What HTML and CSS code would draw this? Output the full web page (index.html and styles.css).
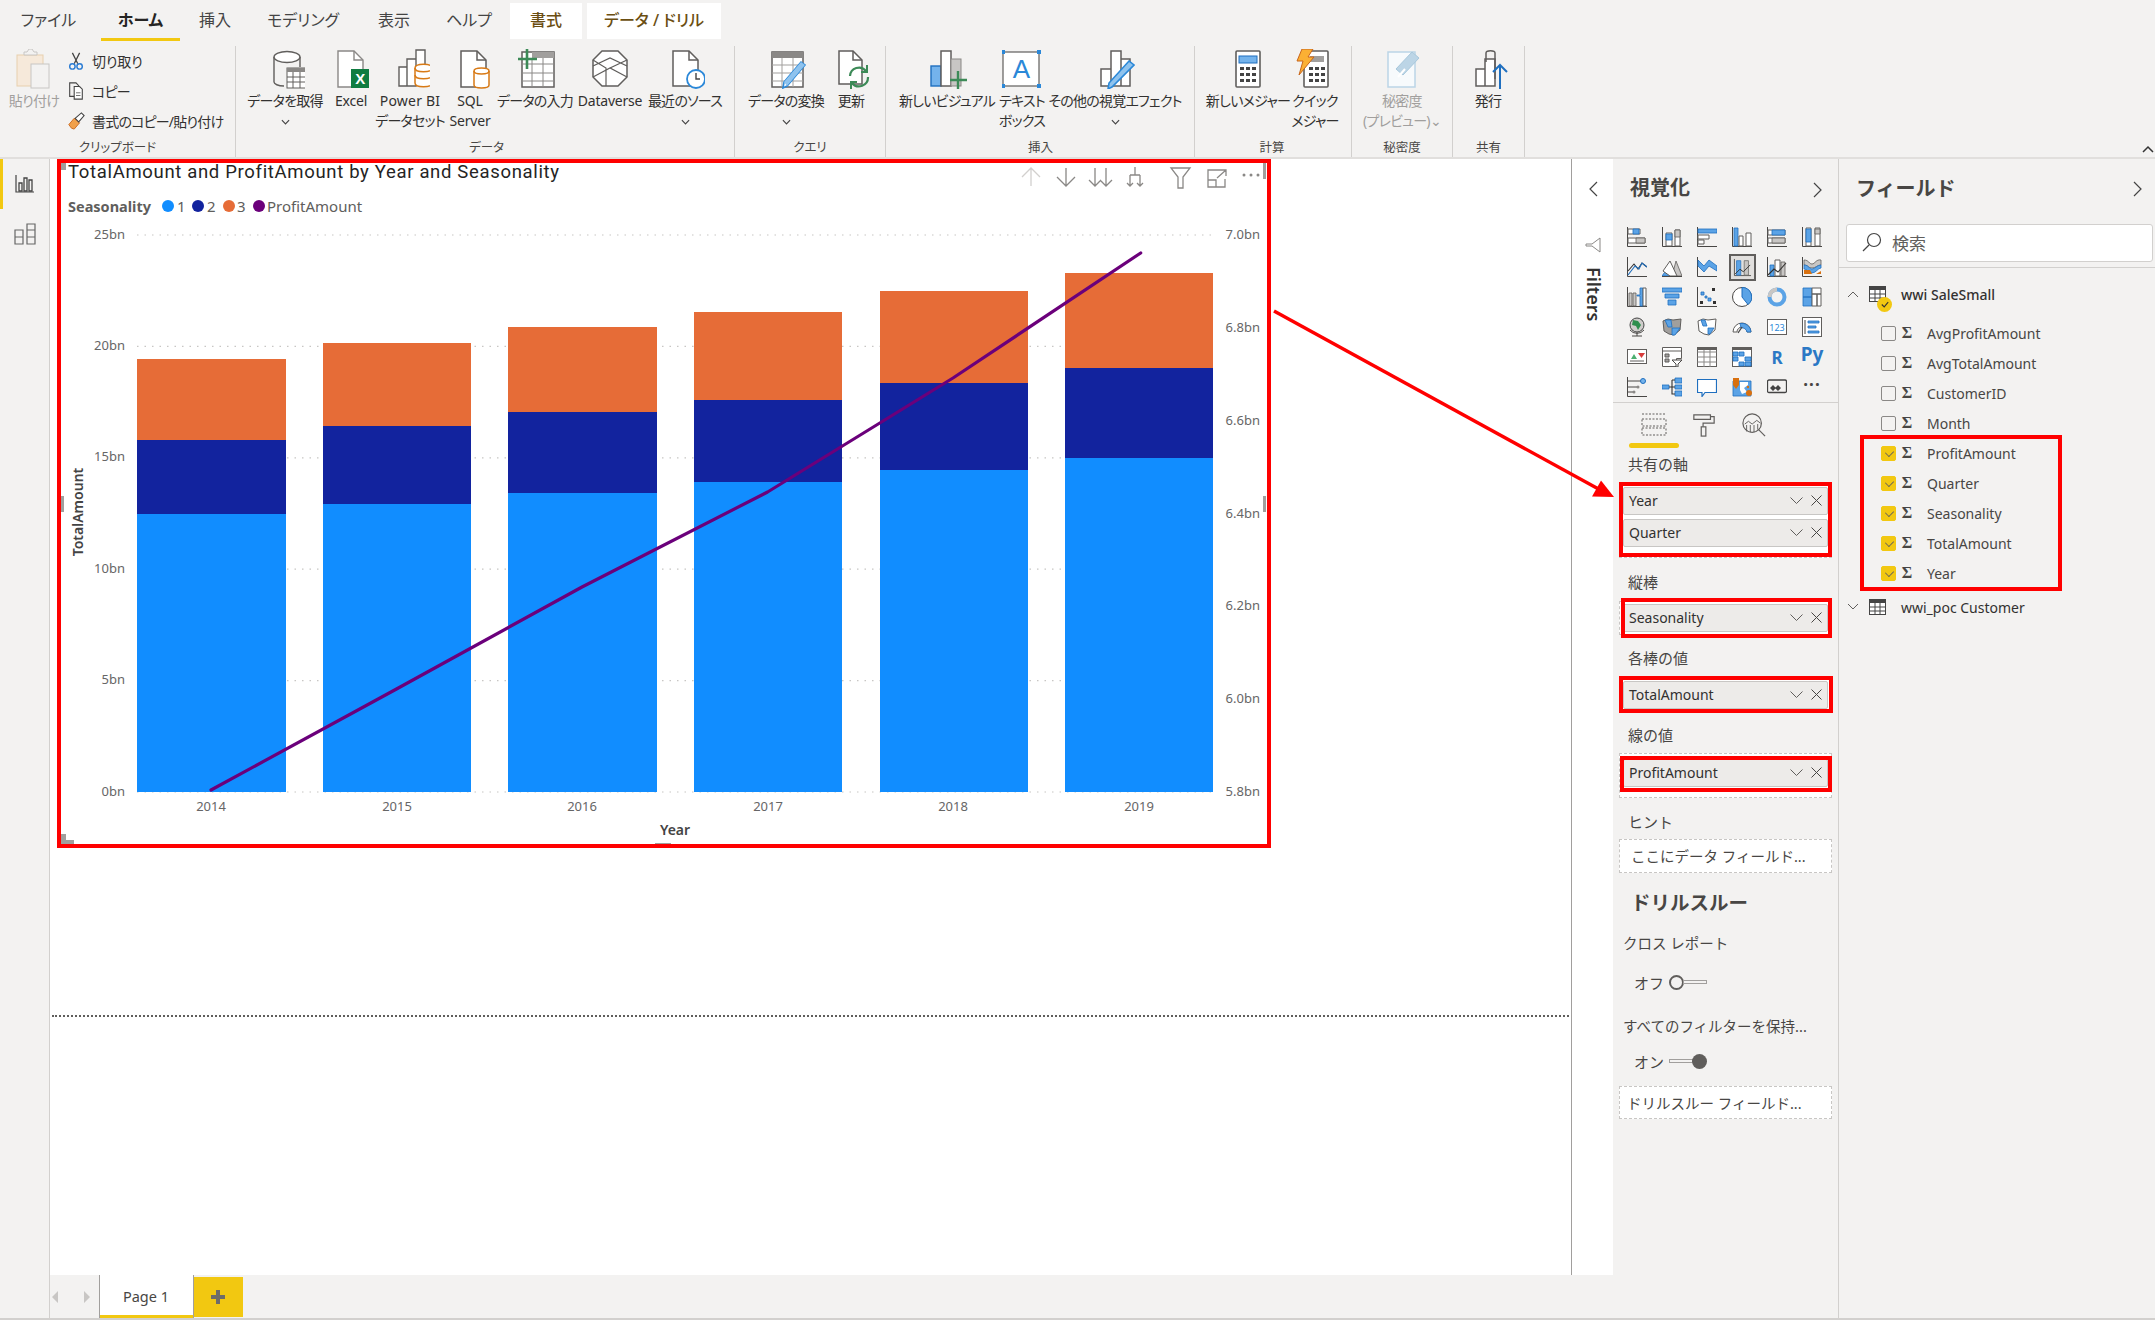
FILE: index.html
```html
<!DOCTYPE html>
<html lang="ja">
<head>
<meta charset="utf-8">
<title>Power BI Desktop</title>
<link rel="stylesheet" href="styles.css">
</head>
<body>
<header class="ribbon">
  <nav class="tabs">
    <span class="tab t-file">ファイル</span>
    <span class="tab t-home active">ホーム</span>
    <span class="tab t-ins">挿入</span>
    <span class="tab t-model">モデリング</span>
    <span class="tab t-view">表示</span>
    <span class="tab t-help">ヘルプ</span>
    <span class="tab t-fmt ctx">書式</span>
    <span class="tab t-drill ctx">データ / ドリル</span>
  </nav>
  <div class="groups">
    <section class="group g-clip">
      <div class="cmds clip">
        <div class="cmd faded w-paste">
          <svg class="ric" viewBox="0 0 40 40"><rect x="3" y="6" width="26" height="31" fill="#f6e9da" stroke="#e8cfae"/><path d="M10 6V3h3l2-3h3l2 3h3v3z" fill="#f3f2f1" stroke="#c8c6c4"/><rect x="17" y="15" width="18" height="24" fill="#f3f2f1" stroke="#c8c6c4"/></svg>
          <span>貼り付け</span>
        </div>
        <div class="clip-list">
          <div class="mini"><svg class="sic" viewBox="0 0 20 20"><path d="M6 1l6 12M14 1L8 13" fill="none" stroke="#444" stroke-width="1.4"/><circle cx="6" cy="16" r="3" fill="none" stroke="#2b7cd3" stroke-width="1.6"/><circle cx="14" cy="16" r="3" fill="none" stroke="#2b7cd3" stroke-width="1.6"/></svg><span>切り取り</span></div>
          <div class="mini tight"><svg class="sic" viewBox="0 0 20 20"><path d="M3 1h7l3 3v12H3z" fill="none" stroke="#444" stroke-width="1.2"/><path d="M8 5h6l3 3v11H8z" fill="#fff" stroke="#444" stroke-width="1.2"/><path d="M10 12h5M10 15h5" stroke="#666"/></svg><span>コピー</span></div>
          <div class="mini tight"><svg class="sic" viewBox="0 0 20 20"><path d="M2 14l6-7 6 5-6 7-3-1z" fill="#f0a04b" stroke="#c8651b"/><path d="M9 7l7-6 3 3-6 7z" fill="#fff" stroke="#444" stroke-width="1.2"/></svg><span>書式のコピー/貼り付け</span></div>
        </div>
      </div>
      <div class="glabel">クリップボード</div>
    </section>

    <section class="group g-data">
      <div class="cmds">
        <div class="cmd w72">
          <svg class="ric" viewBox="-3 0 40 40"><path d="M6 8v25c0 2 4 4 10 4M32 8v10" fill="none" stroke="#605e5c" stroke-width="1.4"/><ellipse cx="19" cy="8" rx="13" ry="5.5" fill="#fff" stroke="#605e5c" stroke-width="1.4"/><rect x="19" y="19" width="19" height="20" fill="#fff" stroke="#605e5c"/><rect x="19" y="19" width="19" height="4" fill="#8a8886"/><path d="M25 23v16M32 23v16M19 28h19M19 33h19" stroke="#605e5c"/></svg>
          <span>データを取得</span><svg class="chev" viewBox="0 0 10 6"><path d="M1 1l4 4 4-4" fill="none" stroke="#444" stroke-width="1.3"/></svg>
        </div>
        <div class="cmd w60">
          <svg class="ric" viewBox="0 0 40 40"><path d="M7 2h16l9 9v27H7z" fill="#fff" stroke="#8a8886" stroke-width="1.4"/><path d="M23 2v9h9" fill="none" stroke="#8a8886" stroke-width="1.4"/><rect x="20" y="20" width="18" height="19" fill="#107c41"/><text x="29" y="35" class="xl">X</text></svg>
          <span class="lat">Excel</span>
        </div>
        <div class="cmd w58">
          <svg class="ric" viewBox="-6 0 40 40"><path d="M3 18h8v19H3zM11 10h9v27h-9zM20 1h9v18h-9z" fill="#fff" stroke="#605e5c" stroke-width="1.4"/><path d="M19 19c0-5 17-5 17 0v15c0 5-17 5-17 0z" fill="#fff" stroke="#d87a16" stroke-width="1.5"/><path d="M19 19c0 5 17 5 17 0M19 26c0 5 17 5 17 0" fill="none" stroke="#d87a16" stroke-width="1.5"/></svg>
          <span><b class="lat pbi">Power BI</b><br>データセット</span>
        </div>
        <div class="cmd w62">
          <svg class="ric" viewBox="-4 0 40 40"><path d="M7 2h16l9 9v27H7z" fill="#fff" stroke="#605e5c" stroke-width="1.5"/><path d="M23 2v9h9" fill="none" stroke="#605e5c" stroke-width="1.5"/><path d="M20 22c0-4 15-4 15 0v14c0 4-15 4-15 0z" fill="#fff" stroke="#d87a16" stroke-width="1.5"/><path d="M20 22c0 4 15 4 15 0" fill="none" stroke="#d87a16" stroke-width="1.5"/></svg>
          <span class="lat">SQL<br>Server</span>
        </div>
        <div class="cmd w68">
          <svg class="ric" viewBox="-2 0 40 40"><rect x="5" y="3" width="32" height="35" fill="#fff" stroke="#605e5c" stroke-width="1.5"/><rect x="15" y="3" width="22" height="6" fill="#a19f9d"/><path d="M5 15h32M5 24h32M5 32h32M15 9v29M26 9v29" stroke="#8a8886"/><path d="M10 0v20M1 10h19" stroke="#3c8a57" stroke-width="2.6"/></svg>
          <span>データの入力</span>
        </div>
        <div class="cmd w82">
          <svg class="ric" viewBox="0 0 40 40"><path d="M12 2h16l9 9v17l-9 9H12l-9-9V11z" fill="#fff" stroke="#605e5c" stroke-width="1.5"/><path d="M3 17l17-8 17 8M3 11l13 8v18M3 28l17-9 17 9M37 11L20 19" fill="none" stroke="#605e5c" stroke-width="1.2"/></svg>
          <span class="lat">Dataverse</span>
        </div>
        <div class="cmd w68">
          <svg class="ric" viewBox="-1 0 40 40"><path d="M7 2h16l9 9v26H7z" fill="#fff" stroke="#605e5c" stroke-width="1.5"/><path d="M23 2v9h9" fill="none" stroke="#605e5c" stroke-width="1.5"/><circle cx="30" cy="30" r="9" fill="#fff" stroke="#2b88d8" stroke-width="1.8"/><path d="M30 24v6h4" fill="none" stroke="#444" stroke-width="1.4"/></svg>
          <span>最近のソース</span><svg class="chev" viewBox="0 0 10 6"><path d="M1 1l4 4 4-4" fill="none" stroke="#444" stroke-width="1.3"/></svg>
        </div>
      </div>
      <div class="glabel">データ</div>
    </section>

    <section class="group g-query">
      <div class="cmds">
        <div class="cmd w82">
          <svg class="ric" viewBox="-3 0 40 40"><rect x="3" y="3" width="31" height="35" fill="#fff" stroke="#605e5c" stroke-width="1.5"/><rect x="3" y="3" width="31" height="6" fill="#8a8886"/><path d="M3 16h31M3 24h31M3 32h31M13 9v29M24 9v29" stroke="#a19f9d"/><path d="M18 37l-4 2 1-6 17-20 4 3z" fill="#fff" stroke="#2b88d8" stroke-width="1.6"/><path d="M15 33l17-20 4 3-18 21z" fill="#8fc3ee"/></svg>
          <span>データの変換</span><svg class="chev" viewBox="0 0 10 6"><path d="M1 1l4 4 4-4" fill="none" stroke="#444" stroke-width="1.3"/></svg>
        </div>
        <div class="cmd w48">
          <svg class="ric" viewBox="-1 0 40 40"><path d="M7 2h14l9 9v24H7z" fill="#fff" stroke="#605e5c" stroke-width="1.5"/><path d="M21 2v9h9" fill="none" stroke="#605e5c" stroke-width="1.5"/><path d="M18 27a9 9 0 0 1 16-5M36 28a9 9 0 0 1-16 6" fill="none" stroke="#3c8a57" stroke-width="2.2"/><path d="M35 16v7h-6M19 40v-7h6" fill="none" stroke="#3c8a57" stroke-width="2"/></svg>
          <span>更新</span>
        </div>
      </div>
      <div class="glabel">クエリ</div>
    </section>

    <section class="group g-insert">
      <div class="cmds">
        <div class="cmd w100">
          <svg class="ric" viewBox="-3 0 40 40"><rect x="1" y="17" width="10" height="20" fill="#74b3ec" stroke="#1f6fbf" stroke-width="1.4"/><rect x="11" y="2" width="10" height="35" fill="#fff" stroke="#605e5c" stroke-width="1.5"/><rect x="21" y="10" width="10" height="27" fill="#c8c6c4" stroke="#8a8886"/><path d="M28 22v18M20 31h18" stroke="#3c8a57" stroke-width="2.4"/></svg>
          <span>新しいビジュアル</span>
        </div>
        <div class="cmd w50">
          <svg class="ric" viewBox="1 0 40 40"><rect x="2" y="3" width="36" height="34" fill="#fff" stroke="#605e5c" stroke-width="1.2"/><path d="M0 1h4v4H0zM36 1h4v4h-4zM0 35h4v4H0zM36 35h4v4h-4z" fill="#2b88d8"/><text x="20" y="29" class="txa">A</text></svg>
          <span>テキスト<br>ボックス</span>
        </div>
        <div class="cmd w136">
          <svg class="ric" viewBox="-3 0 40 40"><path d="M3 20h10v17H3zM13 2h10v35H13zM23 10h9v27h-9z" fill="#fff" stroke="#605e5c" stroke-width="1.5"/><path d="M14 38l-4 2 1-6 20-22 5 4z" fill="#8fc3ee" stroke="#2b88d8" stroke-width="1.6"/></svg>
          <span>その他の視覚エフェクト</span><svg class="chev" viewBox="0 0 10 6"><path d="M1 1l4 4 4-4" fill="none" stroke="#444" stroke-width="1.3"/></svg>
        </div>
      </div>
      <div class="glabel">挿入</div>
    </section>

    <section class="group g-calc">
      <div class="cmds">
        <div class="cmd w90">
          <svg class="ric" viewBox="0 0 40 40"><rect x="8" y="2" width="24" height="36" rx="1" fill="#fff" stroke="#605e5c" stroke-width="1.6"/><rect x="11" y="7" width="18" height="7" fill="#74b3ec" stroke="#1f6fbf"/><path d="M12 18h4v3h-4zM18 18h4v3h-4zM24 18h4v3h-4zM12 24h4v3h-4zM18 24h4v3h-4zM24 24h4v3h-4zM12 30h4v3h-4zM18 30h4v3h-4zM24 30h4v3h-4z" fill="#444"/></svg>
          <span>新しいメジャー</span>
        </div>
        <div class="cmd w44">
          <svg class="ric" viewBox="3 0 40 40"><rect x="12" y="2" width="24" height="36" rx="1" fill="#fff" stroke="#605e5c" stroke-width="1.6"/><rect x="18" y="7" width="14" height="6" fill="#a19f9d"/><path d="M17 18h4v3h-4zM23 18h4v3h-4zM29 18h4v3h-4zM17 24h4v3h-4zM23 24h4v3h-4zM29 24h4v3h-4zM17 30h4v3h-4zM23 30h4v3h-4zM29 30h4v3h-4z" fill="#444"/><path d="M10 0h11l-5 8h6L7 26l4-14H5z" fill="#fbb034" stroke="#c8651b"/></svg>
          <span>クイック<br>メジャー</span>
        </div>
      </div>
      <div class="glabel">計算</div>
    </section>

    <section class="group g-sens">
      <div class="cmds">
        <div class="cmd w100 faded">
          <svg class="ric" viewBox="0 0 40 40"><path d="M6 3h27v35H6z" fill="#f7fafc" stroke="#bcd5e6" stroke-width="1.5"/><path d="M14 20L30 3l7 6-16 17z" fill="#bcd5e6" stroke="#a8c8dc"/><path d="M16 28l7-8" stroke="#fff" stroke-width="2"/></svg>
          <span>秘密度<br>(プレビュー)⌄</span>
        </div>
      </div>
      <div class="glabel">秘密度</div>
    </section>

    <section class="group g-share">
      <div class="cmds">
        <div class="cmd w70">
          <svg class="ric" viewBox="-4 0 40 40"><path d="M4 20h9v17H4zM13 10h10v27H13z" fill="#fff" stroke="#605e5c" stroke-width="1.5"/><path d="M14 13V4c0-3 9-3 9 0v26" fill="none" stroke="#605e5c" stroke-width="1.5"/><path d="M28 40V16M21 23l7-7 7 7" fill="none" stroke="#1f6fbf" stroke-width="2"/></svg>
          <span>発行</span>
        </div>
      </div>
      <div class="glabel">共有</div>
    </section>
    <div class="collapse"><svg viewBox="0 0 12 8"><path d="M1 7l5-5 5 5" fill="none" stroke="#333" stroke-width="1.5"/></svg></div>
  </div>
</header>

<main class="main">
  <aside class="rail">
    <div class="rail-btn on"><svg viewBox="0 0 20 18"><path d="M1 0v17h18" fill="none" stroke="#444" stroke-width="1.2"/><path d="M4 8h3v8H4zM9 3h3v13H9zM14 5h3v11h-3z" fill="none" stroke="#444" stroke-width="1.3"/></svg></div>
    <div class="rail-btn"><svg viewBox="0 0 24 24"><path d="M2 8h8v7H2zM2 15h8v7H2zM14 2h8v6h-8zM14 8h8v7h-8zM14 15h8v7h-8z" fill="none" stroke="#666" stroke-width="1.2"/></svg></div>
  </aside>

  <div class="center">
    <div class="workspace">
      <div class="canvas">
        <svg class="chart" width="1214" height="689" viewBox="57 159 1214 689">
          <g class="grid">
            <line x1="137" x2="1213" y1="235" y2="235"/><line x1="137" x2="1213" y1="346.4" y2="346.4"/><line x1="137" x2="1213" y1="457.8" y2="457.8"/><line x1="137" x2="1213" y1="569.2" y2="569.2"/><line x1="137" x2="1213" y1="680.6" y2="680.6"/><line x1="137" x2="1213" y1="792" y2="792"/>
          </g>
          <g class="b1">
            <rect x="137" y="514" width="149" height="278"/><rect x="323" y="504" width="148" height="288"/><rect x="508" y="493" width="149" height="299"/><rect x="694" y="482" width="148" height="310"/><rect x="880" y="470" width="148" height="322"/><rect x="1065" y="458" width="148" height="334"/>
          </g>
          <g class="b2">
            <rect x="137" y="440" width="149" height="74"/><rect x="323" y="426" width="148" height="78"/><rect x="508" y="412" width="149" height="81"/><rect x="694" y="400" width="148" height="82"/><rect x="880" y="383" width="148" height="87"/><rect x="1065" y="368" width="148" height="90"/>
          </g>
          <g class="b3">
            <rect x="137" y="359" width="149" height="81"/><rect x="323" y="343" width="148" height="83"/><rect x="508" y="327" width="149" height="85"/><rect x="694" y="312" width="148" height="88"/><rect x="880" y="291" width="148" height="92"/><rect x="1065" y="273" width="148" height="95"/>
          </g>
          <polyline class="line" points="211,790 396.5,689 582,587 767.6,492 953,378 1140.7,253"/>
          <text x="68" y="178" class="title">TotalAmount and ProfitAmount by Year and Seasonality</text>
          <text x="68" y="212" class="leg-h">Seasonality</text>
          <circle cx="168" cy="206" r="6" fill="#118dff"/><text x="177" y="212" class="leg">1</text>
          <circle cx="198" cy="206" r="6" fill="#12239e"/><text x="207" y="212" class="leg">2</text>
          <circle cx="229" cy="206" r="6" fill="#e66c37"/><text x="237" y="212" class="leg">3</text>
          <circle cx="259" cy="206" r="6" fill="#6b007b"/><text x="267" y="212" class="leg">ProfitAmount</text>
          <g class="ax end">
            <text x="125" y="239">25bn</text><text x="125" y="350">20bn</text><text x="125" y="461">15bn</text><text x="125" y="573">10bn</text><text x="125" y="684">5bn</text><text x="125" y="796">0bn</text>
            <text x="1260" y="239">7.0bn</text><text x="1260" y="332">6.8bn</text><text x="1260" y="425">6.6bn</text><text x="1260" y="518">6.4bn</text><text x="1260" y="610">6.2bn</text><text x="1260" y="703">6.0bn</text><text x="1260" y="796">5.8bn</text>
          </g>
          <g class="ax mid">
            <text x="211" y="811">2014</text><text x="397" y="811">2015</text><text x="582" y="811">2016</text><text x="768" y="811">2017</text><text x="953" y="811">2018</text><text x="1139" y="811">2019</text>
          </g>
          <text x="675" y="835" class="ax-t">Year</text>
          <text transform="translate(83 512) rotate(-90)" class="ax-t">TotalAmount</text>
          <g class="tool">
            <path class="off" d="M1031 168v18M1022 177l9-9 9 9"/>
            <path d="M1066 168v18M1057 177l9 9 9-9"/>
            <path d="M1095 168v18M1089 180l6 6 6-6M1106 168v18M1100 180l6 6 6-6"/>
            <path d="M1135 167v8M1130 175h10M1130 175v11M1140 175v11M1127 183l3 3 3-3M1137 183l3 3 3-3"/>
            <path d="M1171 168h19l-7 9v11h-5v-11z"/>
            <path d="M1226 170h-18v17h17v-8M1208 180h8v7M1217 178l9-8M1220 170h6v6"/>
          </g>
          <g class="dots"><circle cx="1244" cy="175" r="1.5"/><circle cx="1251" cy="175" r="1.5"/><circle cx="1258" cy="175" r="1.5"/></g>
          <g class="handle">
            <path d="M61 163h5v7h-5zM1263 163h3v16h-3zM61 834h5v6h8v4H61zM61 496h3v16h-3zM1263 496h3v16h-3zM655 843h16v3h-16z"/>
          </g>
        </svg>
        <div class="page-break"></div>
      </div>
      <aside class="filters">
        <svg class="back" viewBox="0 0 10 16"><path d="M9 1L2 8l7 7" fill="none" stroke="#444" stroke-width="1.2"/></svg>
        <svg class="funnel" viewBox="0 0 16 16"><path d="M15 1L7 7H1v2h6l8 6z" fill="#fff" stroke="#8a8886"/></svg>
        <span class="filters-t">Filters</span>
      </aside>
    </div>
    <footer class="pagebar">
      <svg class="nav" viewBox="0 0 38 14"><path d="M6 1L0 7l6 6zM32 1l6 6-6 6z" fill="#c8c6c4"/></svg>
      <div class="page-tab">Page 1</div>
      <div class="add"><svg viewBox="0 0 14 14"><path d="M7 0v14M0 7h14" stroke="#6e6c69" stroke-width="4"/></svg></div>
    </footer>
  </div>

  <aside class="viz">
    <div class="pane-head"><h2>視覚化</h2><svg class="go" viewBox="0 0 10 16"><path d="M1 1l7 7-7 7" fill="none" stroke="#444" stroke-width="1.2"/></svg></div>
    <div class="vgrid">
      <svg viewBox="0 0 20 20"><path class="a" d="M.5 0v19.500H20"/><path class="o" d="M1 2h12v5H1zM1 11h17v5H1z"/><path class="bl" d="M6 2h6v5H6z"/><path class="gr" d="M9 11h9v5H9z"/></svg>
      <svg viewBox="0 0 20 20"><path class="a" d="M.5 0v19.500H20"/><path class="o" d="M4 6h6v13H4zM13 3h5v16h-5z"/><path class="bl" d="M4 7h6v6H4z"/><path class="gr" d="M13 3h5v7h-5z"/></svg>
      <svg viewBox="0 0 20 20"><path class="a" d="M.5 0v19.500H20"/><path class="bl" d="M1 2h19v4H1z"/><path class="o" d="M1 8h11v4H1zM1 13h6v4H1z"/></svg>
      <svg viewBox="0 0 20 20"><path class="a" d="M.5 0v19.500H20"/><path class="bl" d="M2 1h4v18H2z"/><path class="o" d="M7 9h4v10H7zM14 6h5v13h-5z"/></svg>
      <svg viewBox="0 0 20 20"><path class="a" d="M.5 0v19.500H20"/><path class="o" d="M1 3h17v5H1zM1 11h17v5H1z"/><path class="bl" d="M5 3h13v5H5z"/><path class="gr" d="M5 11h13v5H5z"/></svg>
      <svg viewBox="0 0 20 20"><path class="a" d="M.5 0v19.500H20"/><path class="o" d="M4 1h5v18H4zM13 1h5v18h-5z"/><path class="bl" d="M4 2h5v13H4z"/><path class="gr" d="M13 2h5v5h-5z"/></svg>

      <svg viewBox="0 0 20 20"><path class="a" d="M.5 0v19.500H20"/><path class="l" d="M1 14l6-7 4 5 4-6 5 4"/><path class="lb" d="M1 18l7-9 4 3 3-6 5 4"/></svg>
      <svg viewBox="0 0 20 20"><path class="gr" d="M10 19l4-15 6 15z"/><path class="bl" d="M0 19l5-7 5 7z"/><path class="o" d="M1 14l7-10 7 15H8z"/><path class="a" d="M0 19.500h20"/></svg>
      <svg viewBox="0 0 20 20"><path class="a" d="M.5 0v19.500H20"/><path class="bl" d="M1 3l6 6 5-6 8 6v5l-8-5-5 6-6-6z"/></svg>
      <svg class="sel" viewBox="-3.500 -3.500 27 27"><path class="a" d="M.5 0v19.500H20"/><path class="bl" d="M3 2h5v17H3z"/><path class="gr" d="M12 2h5v17h-5z"/><path class="l" d="M1 18l6-6 4 3 8-8"/></svg>
      <svg viewBox="0 0 20 20"><path class="a" d="M.5 0v19.500H20"/><path class="bl" d="M3 8h4v11H3z"/><path class="o" d="M8 3h5v16H8z"/><path class="gr" d="M14 5h4v14h-4z"/><path class="l" d="M1 18l6-6 4 3 8-9"/></svg>
      <svg viewBox="0 0 20 20"><path class="a" d="M.5 0v19.500H20"/><path class="gr" d="M2 3c5 0 5 4 8 4s4-5 9-4v5c-4 0-5 3-9 3S6 8 2 8z"/><path class="bl" d="M2 8c5 0 5 4 8 4s5-4 9-4v3c-3 0-5 5-9 5s-4-4-8-4z"/><path class="or" d="M2 13h6l2 4h9v-3l-5 3H2z"/></svg>

      <svg viewBox="0 0 20 20"><path class="a" d="M.5 0v19.500H20"/><path class="gr" d="M2 6h3v13H2zM6 6h3v13H6z"/><path class="bl" d="M10 8h3V1h3v18h-3V9h-3z"/><path class="o" d="M16 1h3v18h-3z"/></svg>
      <svg viewBox="0 0 20 20"><path class="bl" d="M0 1h20v4H0zM3 7h14v4H3zM6 13h8v5H6z"/></svg>
      <svg viewBox="0 0 20 20"><path class="a" d="M.5 0v19.500H20"/><path class="bl" d="M4 5h3v3H4zM11 11h3v3h-3zM8 9h2v2H8z"/><path class="k" d="M15 1h3v3h-3zM3 14h3v3H3zM16 14h3v3h-3z"/></svg>
      <svg viewBox="0 0 20 20"><circle class="o2" cx="10" cy="10" r="9.500"/><path class="bl2" d="M10 .5a9.500 9.500 0 0 1 6 17L10 10z"/></svg>
      <svg viewBox="0 0 20 20"><circle cx="10" cy="10" r="7.500" class="ring"/><path class="ringg" d="M10 2.500a7.500 7.500 0 0 0-7.500 7.500"/></svg>
      <svg viewBox="0 0 20 20"><path class="bl" d="M1 1h9v9H1zM1 10h9v9H1z"/><path class="o" d="M10 1h9v6h-9zM10 7h5v12h-5zM15 7h4v12h-4z"/></svg>

      <svg viewBox="0 0 20 20"><circle cx="10" cy="8" r="7" fill="#cfcdcb" stroke="#444"/><path d="M6 3l5 1 3 4-3 5-2-4-4-1z" fill="#2f8f4e"/><path class="a" d="M5 19h10M10 15v4M3 13a9 9 0 0 0 14 0"/></svg>
      <svg viewBox="0 0 20 20"><path class="gr2" d="M1 4l5-2 5 1 8-1-1 11-6 5-5-1-5-3z"/><path class="bl" d="M3 3l6 0 1 7H6zM10 11h8l-5 7h-3z"/></svg>
      <svg viewBox="0 0 20 20"><path class="o" d="M1 4l5-2 5 1 8-1-1 11-6 5-5-1-5-3z"/><path class="bl" d="M4 3l4 0 2 6H6zM11 11h6l-4 6h-2z"/></svg>
      <svg viewBox="0 0 20 20"><path class="gaugeg" d="M1 15a9 9 0 0 1 18 0h-4a5 5 0 0 0-10 0z"/><path class="bl" d="M8 6.500a9 9 0 0 1 11 8.500h-4a5 5 0 0 0-6-4z"/><path class="ln" d="M6 16l4-6"/></svg>
      <svg viewBox="0 0 20 20"><rect class="o" x=".5" y="2.500" width="19" height="15"/><text x="10" y="14" class="n123">123</text></svg>
      <svg viewBox="0 0 20 20"><rect class="o" x=".5" y=".5" width="19" height="19"/><path class="bl" d="M6 4h11v2H6zM6 9h8v2H6zM6 14h11v2H6z"/><path d="M3 3v14" stroke="#a19f9d" stroke-width="2"/></svg>

      <svg viewBox="0 0 20 20"><rect class="o" x=".5" y="2.500" width="19" height="14"/><path d="M4 12l3-5 3 5z" fill="#4caf70"/><path d="M11 6h7l-3.500 5z" fill="#d83b3b"/><path d="M3 14h14" stroke="#605e5c"/></svg>
      <svg viewBox="0 0 20 20"><path class="o" d="M.5.500h19v11h-5v8H.5z"/><path d="M.5 4h19" stroke="#605e5c"/><path class="k2" d="M3 7h4v3H3zM3 12h4v3H3z"/><path class="fn" d="M10 13h10l-4 4v3h-2v-3z"/></svg>
      <svg viewBox="0 0 20 20"><rect class="o" x=".5" y=".5" width="19" height="19"/><path d="M.5 5h19M.5 10h19M.5 15h19M7 0v20M13 0v20" stroke="#8a8886"/><path d="M0 0h20v3H0z" fill="#605e5c"/></svg>
      <svg viewBox="0 0 20 20"><rect class="o" x=".5" y=".5" width="19" height="19"/><path class="bl" d="M1 5h5v4H1zM7 5h5v4H7zM13 10h6v4h-6zM7 15h5v4H7zM1 10h5v4H1zM13 15h6v4h-6z"/><path d="M0 0h20v3H0z" fill="#605e5c"/></svg>
      <span class="vt r">R</span>
      <span class="vt py">Py</span>

      <svg viewBox="0 0 20 20"><path class="a" d="M.5 0v19.500H20M1 4h13M1 10h9M1 15h5"/><circle cx="16" cy="4" r="2.500" fill="#74b3ec" stroke="#1f6fbf"/><circle cx="11" cy="10" r="1.500" fill="#8a8886"/><circle cx="7" cy="15" r="1.500" fill="#8a8886"/></svg>
      <svg viewBox="0 0 20 20"><path class="bl" d="M0 8h7v4H0zM13 1h7v5h-7zM13 8h7v4h-7zM13 14h7v5h-7z"/><path class="l" d="M7 10h6M10 3v14h3M10 3h3"/></svg>
      <svg viewBox="0 0 20 20"><path d="M.5 2.500h19v13H8l-3 4v-4H.5z" fill="#fff" stroke="#1f6fbf" stroke-width="1.2"/></svg>
      <svg viewBox="0 0 20 20"><path class="bl" d="M1 4h18v15H1z"/><path d="M8 5h8v3l-4 3 3 4-5 2-2-4z" fill="#fff"/><path d="M1 1h6v7l-3 4-3-4z" fill="#d8700f"/><circle cx="17" cy="16" r="3" fill="#d8700f"/><circle cx="16" cy="10" r="1.200" fill="#d8700f"/></svg>
      <svg viewBox="0 0 20 20"><path class="ln" d="M2 3h16a1.500 1.500 0 0 1 1.500 1.500V14c0 1-.5 1.500-1.500 1.500H2C1 15.500.5 15 .5 14V4.500A1.500 1.500 0 0 1 2 3z"/><path d="M6 8l3 3-3 3-3-3zM11 8l3 3-3 3-3-3zM9 11l2-2 2 2-2 2z" fill="#444"/></svg>
      <span class="vt more">···</span>
    </div>
    <div class="fmt">
      <div class="fmt-btn on"><svg viewBox="0 0 26 24"><path d="M1 1h24M1 6h24v7H1zM1 15h24v7H1z" fill="none" stroke="#605e5c" stroke-dasharray="2 1.500"/></svg></div>
      <div class="fmt-btn"><svg viewBox="0 0 24 26"><path d="M1 2h18v5H1zM19 4h4v7H11v4" fill="none" stroke="#605e5c" stroke-width="1.3"/><rect x="9" y="15" width="5" height="10" fill="none" stroke="#605e5c" stroke-width="1.3"/></svg></div>
      <div class="fmt-btn"><svg viewBox="0 0 26 26"><circle cx="11" cy="11" r="10" fill="none" stroke="#605e5c" stroke-width="1.3"/><path d="M18 18l7 7" stroke="#605e5c" stroke-width="1.3"/><path d="M3 12l4-3 4 3 5-4 4 3M5 13v7M9 13v8M13 13v8M17 12v6" fill="none" stroke="#605e5c"/></svg></div>
    </div>
    <div class="wells">
      <div class="wlabel m5">共有の軸</div>
      <div class="drop axis">
        <div class="well"><span>Year</span><svg class="dn" viewBox="0 0 13 8"><path d="M.5.500l6 6 6-6"/></svg><svg class="xx" viewBox="0 0 11 11"><path d="M.5.500l10 10M10.500.500l-10 10"/></svg></div>
        <div class="well"><span>Quarter</span><svg class="dn" viewBox="0 0 13 8"><path d="M.5.500l6 6 6-6"/></svg><svg class="xx" viewBox="0 0 11 11"><path d="M.5.500l10 10M10.500.500l-10 10"/></svg></div>
      </div>
      <div class="wlabel m13">縦棒</div>
      <div class="drop solo gap6"><div class="well"><span>Seasonality</span><svg class="dn" viewBox="0 0 13 8"><path d="M.5.500l6 6 6-6"/></svg><svg class="xx" viewBox="0 0 11 11"><path d="M.5.500l10 10M10.500.500l-10 10"/></svg></div></div>
      <div class="wlabel m12">各棒の値</div>
      <div class="drop solo gap7"><div class="well"><span>TotalAmount</span><svg class="dn" viewBox="0 0 13 8"><path d="M.5.500l6 6 6-6"/></svg><svg class="xx" viewBox="0 0 11 11"><path d="M.5.500l10 10M10.500.500l-10 10"/></svg></div></div>
      <div class="wlabel m12">線の値</div>
      <div class="drop tall"><div class="well"><span>ProfitAmount</span><svg class="dn" viewBox="0 0 13 8"><path d="M.5.500l6 6 6-6"/></svg><svg class="xx" viewBox="0 0 11 11"><path d="M.5.500l10 10M10.500.500l-10 10"/></svg></div></div>
      <div class="wlabel m13">ヒント</div>
      <div class="place gap4">ここにデータ フィールド...</div>
      <h3 class="drill">ドリルスルー</h3>
      <div class="opt m13">クロス レポート</div>
      <div class="tog m15"><span>オフ</span><i class="knob off"></i><i class="track"></i></div>
      <div class="opt m20">すべてのフィルターを保持...</div>
      <div class="tog m11"><span>オン</span><i class="track"></i><i class="knob"></i></div>
      <div class="place dth">ドリルスルー フィールド...</div>
    </div>
  </aside>

  <aside class="fields">
    <div class="pane-head"><h2>フィールド</h2><svg class="go" viewBox="0 0 10 16"><path d="M1 1l7 7-7 7" fill="none" stroke="#444" stroke-width="1.2"/></svg></div>
    <div class="search"><svg viewBox="0 0 20 20"><circle cx="12" cy="8" r="6.500" fill="none" stroke="#444" stroke-width="1.2"/><path d="M7 13l-6 6" stroke="#444" stroke-width="1.2"/></svg><span>検索</span></div>
    <div class="tree">
      <div class="tbl"><svg class="tw" viewBox="0 0 12 8"><path d="M1 7l5-5 5 5" fill="none" stroke="#605e5c"/></svg><svg class="ti" viewBox="0 0 17 16"><rect x=".5" y=".5" width="16" height="15" fill="#fff" stroke="#444"/><path d="M0 0h17v4H0z" fill="#444"/><path d="M0 8h17M0 12h17M6 4v12M11 4v12" stroke="#444"/></svg><i class="badge"><svg viewBox="0 0 10 8"><path d="M1 4l3 3 5-6" fill="none" stroke="#333" stroke-width="1.4"/></svg></i><span class="strong">wwi SaleSmall</span></div>
      <div class="flist">
        <div class="fld"><i class="cb"></i><b>Σ</b><span>AvgProfitAmount</span></div>
        <div class="fld"><i class="cb"></i><b>Σ</b><span>AvgTotalAmount</span></div>
        <div class="fld"><i class="cb"></i><b>Σ</b><span>CustomerID</span></div>
        <div class="fld"><i class="cb"></i><b>Σ</b><span>Month</span></div>
        <div class="fld"><i class="cb on"></i><b>Σ</b><span>ProfitAmount</span></div>
        <div class="fld"><i class="cb on"></i><b>Σ</b><span>Quarter</span></div>
        <div class="fld"><i class="cb on"></i><b>Σ</b><span>Seasonality</span></div>
        <div class="fld"><i class="cb on"></i><b>Σ</b><span>TotalAmount</span></div>
        <div class="fld"><i class="cb on"></i><b>Σ</b><span>Year</span></div>
      </div>
      <div class="tbl second"><svg class="tw" viewBox="0 0 12 8"><path d="M1 1l5 5 5-5" fill="none" stroke="#605e5c"/></svg><svg class="ti" viewBox="0 0 17 16"><rect x=".5" y=".5" width="16" height="15" fill="#fff" stroke="#444"/><path d="M0 0h17v4H0z" fill="#444"/><path d="M0 8h17M0 12h17M6 4v12M11 4v12" stroke="#444"/></svg><span>wwi_poc Customer</span></div>
    </div>
  </aside>
</main>
<div class="statusline"></div>

<div class="annot">
  <div class="rb rb-chart"></div>
  <div class="rb rb-axis"></div>
  <div class="rb rb-legend"></div>
  <div class="rb rb-val"></div>
  <div class="rb rb-line"></div>
  <div class="rb rb-fields"></div>
  <svg class="arrow" width="2155" height="1320" viewBox="0 0 2155 1320"><path d="M1274 311L1604 492" fill="none" stroke="#f00" stroke-width="3.500"/><path d="M1614 497l-22-.5 9-16z" fill="#f00"/></svg>
</div>
</body>
</html>
```
FILE: styles.css
```css
* { box-sizing: border-box; }
html, body { margin: 0; padding: 0; }
body {
  width: 2155px; height: 1320px; overflow: hidden; position: relative;
  background: #f3f2f1; color: #323130;
  font-family: "Noto Sans", "Noto Sans CJK JP", sans-serif;
  font-size: 14px;
  font-feature-settings: "palt";
}
i { font-style: normal; display: block; }

/* ribbon */
.ribbon { height: 159px; border-bottom: 2px solid #e1dfdd; background: #f3f2f1; }
.tabs { height: 46px; position: relative; display: flex; }
.tab { position: relative; height: 36px; margin-top: 3px; line-height: 34px; font-size: 16px; text-align: center; color: #444; }
.t-file { width: 97px; }
.t-home { width: 87px; font-weight: 700; color: #252423; }
.t-ins { width: 62px; }
.t-model { width: 114px; }
.t-view { width: 68px; }
.t-help { width: 82px; }
.ctx { background: #fff; color: #6b4e12; font-weight: 500; }
.t-fmt { width: 72px; margin-right: 5px; }
.t-drill { width: 134px; }
.active::after { content: ""; position: absolute; left: 4px; right: 4px; bottom: -2px; height: 3px; background: #f2c811; }

.groups { display: flex; height: 111px; }
.group { display: flex; flex-direction: column; height: 111px; border-right: 1px solid #d2d0ce; }
.cmds { display: flex; height: 93px; flex: none; align-items: flex-start; }
.glabel { height: 18px; line-height: 18px; font-size: 12.500px; text-align: center; color: #484644; }
.g-clip { width: 236px; }
.g-data { width: 499px; padding-left: 13px; }
.g-query { width: 151px; padding-left: 10px; }
.g-insert { width: 309px; padding-left: 11px; }
.g-calc { width: 157px; padding-left: 8px; }
.g-sens { width: 101px; }
.g-share { width: 72px; }
.g-data .glabel, .g-query .glabel, .g-insert .glabel, .g-calc .glabel { margin-left: -10px; }

.cmd { display: flex; flex-direction: column; align-items: center; font-size: 14px; line-height: 20px; text-align: center; white-space: nowrap; color: #323130; letter-spacing: -.75px; }
.cmd span { display: block; margin-top: 2px; }
.cmd .lat { letter-spacing: -.2px; }
.cmd .pbi { letter-spacing: .2px; font-weight: 400; }
.ric { width: 40px; height: 40px; margin-top: 3px; display: block; }
.chev { width: 9px; height: 6px; margin-top: 8px; display: block; }
.cmd.faded { color: #a19f9d; }
.w44 { width: 44px; } .w48 { width: 48px; } .w50 { width: 50px; } .w58 { width: 58px; }
.w60 { width: 60px; } .w62 { width: 62px; } .w68 { width: 68px; } .w70 { width: 70px; }
.w72 { width: 72px; } .w82 { width: 82px; } .w90 { width: 90px; } .w100 { width: 100px; }
.w136 { width: 136px; }
.w-paste { width: 68px; }
.clip-list { display: flex; flex-direction: column; }
.mini { display: flex; align-items: center; height: 30px; gap: 7px; white-space: nowrap; color: #323130; letter-spacing: -.2px; }
.mini.tight { letter-spacing: -.8px; }
.sic { width: 18px; height: 20px; display: block; margin-left: -1px; }
.xl { font: 700 15px "Liberation Sans", sans-serif; fill: #fff; text-anchor: middle; }
.txa { font: 400 26px "Liberation Sans", sans-serif; fill: #2b88d8; text-anchor: middle; }
.collapse { flex: 1; position: relative; }
.collapse svg { position: absolute; right: 1px; bottom: 4px; width: 12px; height: 8px; }

/* body columns */
.main { display: flex; height: 1159px; }
.rail { width: 50px; border-right: 1px solid #d2d0ce; background: #f3f2f1; }
.rail-btn { height: 50px; display: flex; align-items: center; justify-content: center; }
.rail-btn.on { border-left: 3px solid #f2c811; padding-right: 3px; }
.rail-btn svg { width: 20px; height: 18px; }
.rail-btn + .rail-btn svg { width: 24px; height: 24px; }
.center { width: 1563px; display: flex; flex-direction: column; }
.workspace { display: flex; height: 1116px; background: #fff; }
.canvas { width: 1522px; padding: 0 2px; border-right: 1px solid #a19f9d; }
.chart { display: block; margin-left: 5px; }
.page-break { margin-top: 167px; border-top: 2px dotted #605e5c; }
.filters { width: 41px; background: #fff; display: flex; flex-direction: column; align-items: center; }
.back { width: 10px; height: 16px; margin-top: 22px; }
.funnel { width: 16px; height: 16px; margin-top: 40px; }
.filters-t { writing-mode: vertical-rl; font-size: 18px; font-weight: 600; margin-top: 14px; margin-left: 3px; color: #323130; font-feature-settings: normal; }

.grid line { stroke: #c8c6c4; stroke-width: 1.2; stroke-dasharray: 1.500 6; }
.b1 { fill: #118dff; } .b2 { fill: #12239e; } .b3 { fill: #e66c37; }
.line { fill: none; stroke: #6b007b; stroke-width: 3.200; stroke-linecap: round; stroke-linejoin: round; }
.title { font: 400 18.500px Roboto, sans-serif; letter-spacing: .67px; fill: #252423; }
.leg-h { font: 700 14.500px "Noto Sans", sans-serif; fill: #605e5c; }
.leg { font: 400 15px "Noto Sans", sans-serif; fill: #605e5c; }
.ax text { font: 400 13px "Noto Sans", sans-serif; fill: #666; }
.end text { text-anchor: end; }
.mid text { text-anchor: middle; }
.ax-t { font: 600 14px "Noto Sans", sans-serif; fill: #444; text-anchor: middle; }
.tool path { fill: none; stroke: #8a8886; stroke-width: 1.3; }
.tool .off { stroke: #d2d0ce; }
.dots { fill: #8a8886; }
.handle { fill: #a19f9d; }

.pagebar { height: 43px; display: flex; align-items: flex-end; background: #f3f2f1; }
.nav { width: 38px; height: 14px; margin: 0 8.500px 14px 2px; display: block; }
.page-tab { width: 95px; height: 43px; background: #fff; border: 1px solid #a19f9d; border-width: 0 1px; box-shadow: inset 0 -3px 0 #f2c811; text-align: center; line-height: 42px; font-size: 14.500px; color: #484644; }
.add { width: 49px; height: 40px; background: #f2c811; display: flex; align-items: center; justify-content: center; margin-bottom: 1px; }
.add svg { width: 14px; height: 14px; }

/* viz pane */
.viz { width: 226px; border-right: 1px solid #d2d0ce; background: #f3f2f1; font-feature-settings: normal; }
.pane-head { height: 63px; padding: 16px 0 0 17px; position: relative; font-feature-settings: normal; }
.viz .pane-head { padding-top: 15px; }
.pane-head h2 { margin: 0; font-size: 20px; line-height: 28px; font-weight: 700; color: #484644; }
.go { position: absolute; left: 200px; top: 23px; width: 10px; height: 16px; }
.vgrid { display: grid; grid-template-columns: repeat(6, 35px); grid-auto-rows: 30px; height: 180px; padding-left: 6.500px; justify-items: center; align-items: center; }
.vgrid svg { width: 20px; height: 20px; display: block; }
.vgrid .sel { width: 27px; height: 27px; background: #e1dfdd; border: 2px solid #605e5c; }
.vgrid .a { fill: none; stroke: #484644; stroke-width: 1; }
.vgrid .o { fill: #fff; stroke: #605e5c; stroke-width: 1; }
.vgrid .bl { fill: #5ba3e6; stroke: #1f6fbf; stroke-width: .8; }
.vgrid .gr { fill: #c8c6c4; stroke: #605e5c; stroke-width: .8; }
.vgrid .gr2 { fill: #a19f9d; stroke: #605e5c; stroke-width: 1; }
.vgrid .or { fill: #d8700f; }
.vgrid .l { fill: none; stroke: #323130; stroke-width: 1.100; }
.vgrid .lb { fill: none; stroke: #1f6fbf; stroke-width: 1.100; }
.vgrid .k { fill: #323130; }
.vgrid .k2 { fill: #a19f9d; stroke: #605e5c; }
.vgrid .fn { fill: #fff; stroke: #484644; }
.vgrid .o2 { fill: #fff; stroke: #484644; stroke-width: 1; }
.vgrid .bl2 { fill: #5ba3e6; stroke: #1f6fbf; }
.vgrid .ring { fill: none; stroke: #5ba3e6; stroke-width: 4; }
.vgrid .ringg { fill: none; stroke: #c8c6c4; stroke-width: 4; }
.vgrid .gaugeg { fill: #fff; stroke: #605e5c; }
.vgrid .ln { fill: none; stroke: #444; stroke-width: 1.300; }
.n123 { font: 400 9px "Noto Sans", sans-serif; fill: #2b88d8; text-anchor: middle; }
.vt { font-family: "Noto Sans", sans-serif; font-weight: 700; color: #2b78c5; line-height: 1; }
.vt.r { font-size: 17px; }
.vt.py { font-size: 19px; margin-top: -6px; }
.vt.more { font-size: 17px; font-weight: 700; color: #484644; margin-top: -6px; letter-spacing: 1px; }

.fmt { border-top: 1px solid #d2d0ce; height: 46px; display: flex; padding-left: 16px; }
.fmt-btn { width: 50px; height: 45px; display: flex; justify-content: center; padding-top: 10px; position: relative; }
.fmt-btn svg { width: 26px; height: 24px; }
.fmt-btn.on::after { content: ""; position: absolute; left: 0; right: 0; bottom: 0; height: 5px; border-radius: 3px; background: #f2c811; }

.wells { padding: 0 6px; }
.wlabel { height: 24px; line-height: 22px; font-size: 15px; padding-left: 9px; color: #484644; }
.m5 { margin-top: 5px; } .m11 { margin-top: 11px; } .m12 { margin-top: 12px; } .m13 { margin-top: 13px; } .m15 { margin-top: 15px; } .m20 { margin-top: 20px; }
.gap4 { margin-top: 4px; } .gap6 { margin-top: 6px; } .gap7 { margin-top: 7px; }
.drop { border: 1px dashed #c8c6c4; background: #fff; padding: 1px 3px; width: 213px; display: flex; flex-direction: column; gap: 4px; }
.drop.axis { margin-top: 8px; height: 73px; }
.drop.solo { height: 34px; padding-top: 2px; }
.drop.tall { margin-top: 5px; height: 45px; padding-top: 5px; }
.well { height: 28px; flex: none; background: #edebe9; border: 1px solid #c8c6c4; border-radius: 2px; display: flex; align-items: center; padding: 0 0 1px 5px; font-size: 14px; color: #323130; }
.well span { flex: 1; }
.dn { width: 13px; height: 8px; margin-right: 8px; display: block; fill: none; stroke: #605e5c; stroke-width: 1; }
.xx { width: 11px; height: 11px; margin-right: 5px; display: block; fill: none; stroke: #484644; stroke-width: 1; }
.place { width: 213px; height: 34px; background: #fff; border: 1px dashed #c8c6c4; line-height: 32px; font-size: 14.500px; padding-left: 11px; color: #484644; white-space: nowrap; }
.place.dth { margin-top: 13px; height: 33px; padding-left: 7px; }
.drill { margin: 15px 0 0; height: 30px; line-height: 30px; font-size: 19.500px; font-weight: 700; padding-left: 12px; color: #484644; }
.opt { height: 24px; line-height: 24px; font-size: 14.500px; padding-left: 4px; color: #484644; white-space: nowrap; }
.tog { height: 24px; display: flex; align-items: center; padding-left: 15px; font-size: 15px; color: #484644; }
.tog span { width: 36px; }
.knob { width: 15px; height: 15px; border-radius: 50%; background: #605e5c; flex: none; }
.knob.off { background: #f3f2f1; border: 2px solid #605e5c; margin-left: -1px; }
.track { width: 24px; height: 4px; background: #f3f2f1; border: 1px solid #a19f9d; margin-left: -1px; margin-right: -1px; flex: none; }

/* fields pane */
.fields { width: 316px; background: #f3f2f1; font-feature-settings: normal; }
.fields .pane-head { height: 65px; }
.fields .go { left: 294px; top: 22px; }
.search { margin-left: 7px; width: 307px; height: 38px; background: #fff; border: 1px solid #d2d0ce; border-radius: 3px; display: flex; align-items: center; padding: 0 0 2px 15px; font-size: 17px; color: #605e5c; }
.search svg { width: 20px; height: 20px; margin-right: 10px; }
.tree { border-top: 1px solid #d2d0ce; margin-top: 5px; padding-top: 11px; }
.tbl { height: 30px; display: flex; align-items: center; position: relative; font-size: 14px; color: #323130; padding-left: 8px; }
.tw { width: 12px; height: 8px; margin-right: 10px; flex: none; }
.ti { width: 17px; height: 16px; margin-right: 15px; flex: none; }
.badge { position: absolute; left: 38px; top: 18px; width: 15px; height: 15px; background: #f2c811; border-radius: 50%; display: flex; align-items: center; justify-content: center; }
.badge svg { width: 8px; height: 7px; }
.tbl .strong { font-weight: 500; }
.flist { margin-top: 9px; }
.fld { height: 30px; display: flex; align-items: center; padding-left: 42px; font-size: 14px; color: #484644; }
.cb { width: 15px; height: 15px; border: 1px solid #8a8886; border-radius: 2px; flex: none; position: relative; }
.cb.on { background: #f2c811; border-color: #f2c811; }
.cb.on::after { content: ""; position: absolute; left: 4px; top: 1px; width: 6px; height: 8px; border: solid #605e5c; border-width: 0 1.500px 1.500px 0; transform: rotate(45deg) scale(.8); }
.fld b { width: 12px; margin-left: 5px; margin-right: 14px; font-weight: 700; font-size: 16px; line-height: 30px; color: #484644; text-align: center; font-family: "Liberation Serif", serif; }
.tbl.second { margin-top: 4px; }

.statusline { height: 2px; background: #d2d0ce; }

/* red annotation overlay */
.annot { position: absolute; left: 0; top: 0; width: 2155px; height: 1320px; pointer-events: none; }
.rb { position: absolute; border: 4px solid #f00; }
.rb-chart { left: 57px; top: 159px; width: 1214px; height: 689px; }
.rb-axis { left: 1619px; top: 482px; width: 213px; height: 75px; }
.rb-legend { left: 1621px; top: 598px; width: 211px; height: 40px; }
.rb-val { left: 1619px; top: 676px; width: 214px; height: 37px; }
.rb-line { left: 1620px; top: 756px; width: 212px; height: 36px; }
.rb-fields { left: 1860px; top: 435px; width: 202px; height: 156px; }
.arrow { position: absolute; left: 0; top: 0; }
```
